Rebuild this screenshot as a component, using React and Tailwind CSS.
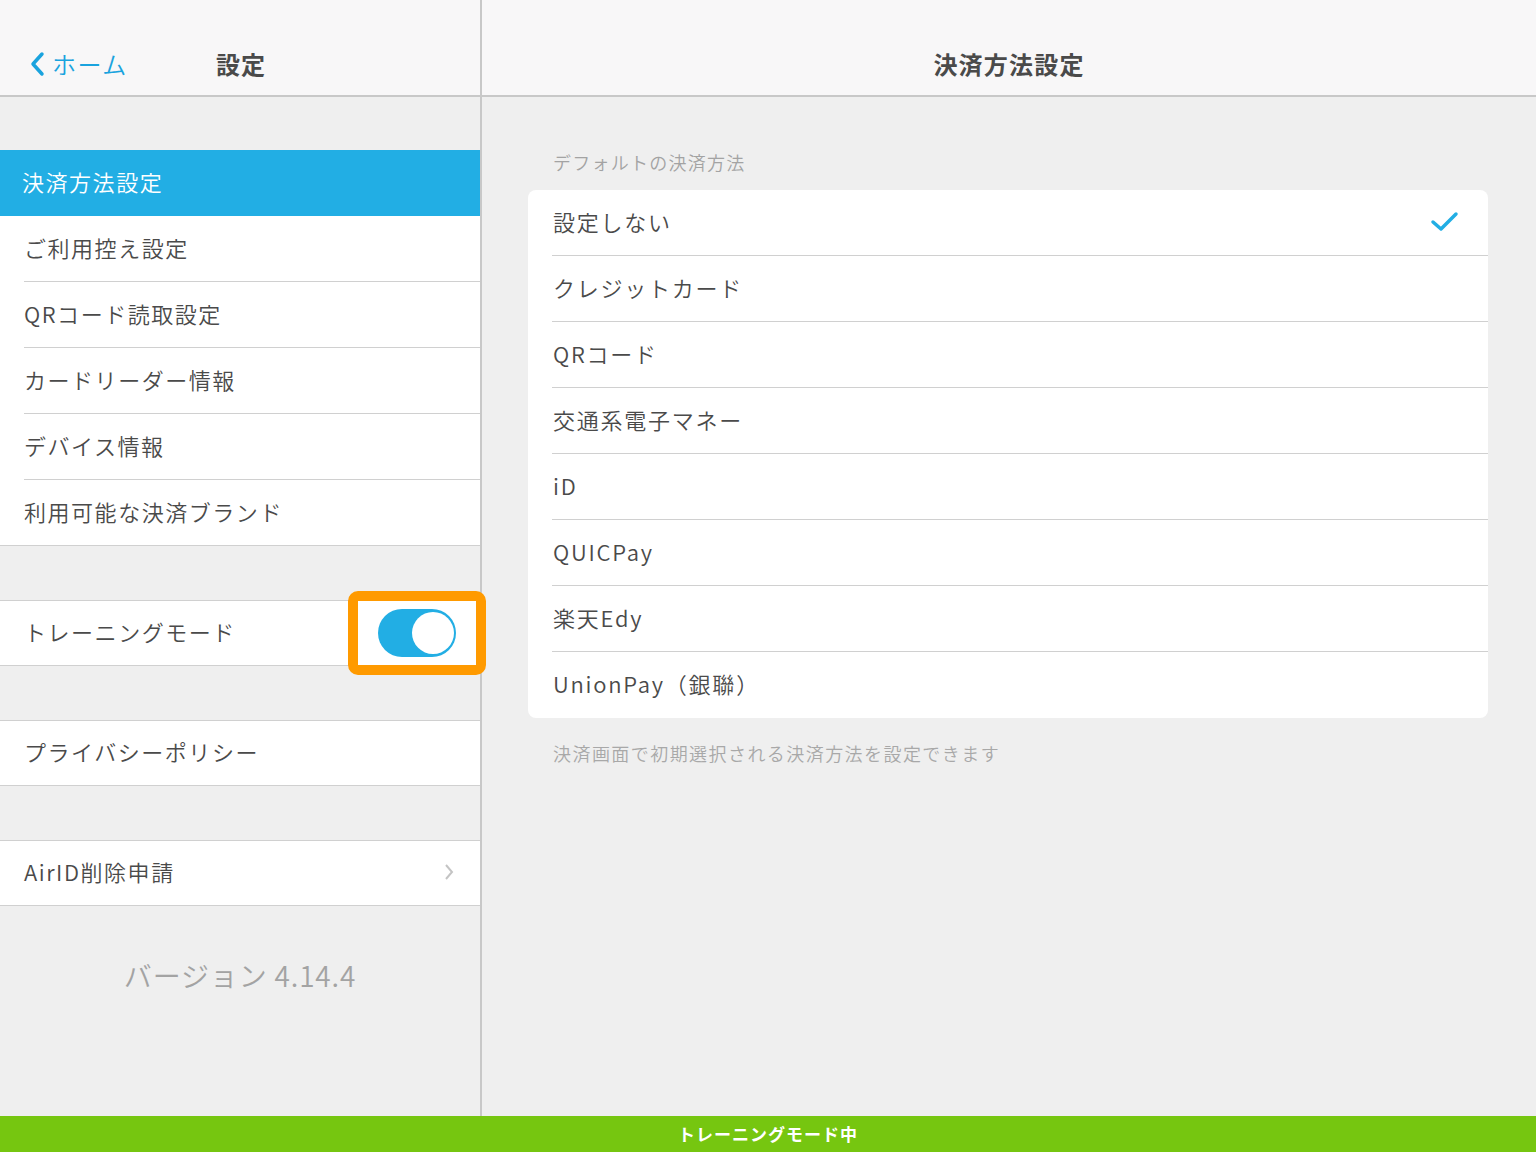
import React from 'react';

const font = { fontFamily: '"Noto Sans CJK JP", "Noto Sans", sans-serif' };

const menuItems = ['決済方法設定', 'ご利用控え設定', 'QRコード読取設定', 'カードリーダー情報', 'デバイス情報', '利用可能な決済ブランド'];
const methods = ['設定しない', 'クレジットカード', 'QRコード', '交通系電子マネー', 'iD', 'QUICPay', '楽天Edy', 'UnionPay（銀聯）'];

const Row = ({ children, divider, className = '' }) => (
  <div className={`relative flex items-center pl-6 pb-[3px] text-[22px] font-[350] tracking-[0.07em] text-[#4a4a4a] ${className}`}>
    {children}
    {divider && <div className="absolute left-6 right-0 bottom-0 h-px bg-[#d0d0d0]" />}
  </div>
);

const App = () => {
  return (
    <div className="w-[1536px] h-[1152px] flex flex-col bg-[#efefef] overflow-hidden" style={font}>
      <div className="flex flex-1 min-h-0">
        {/* Left panel */}
        <div className="w-[482px] flex flex-col border-r-2 border-[#c8c8c8] relative">
          <div className="h-[97px] bg-[#f8f7f8] border-b-2 border-[#c8c8c8] flex items-end pb-[13px] shrink-0">
            <div className="flex items-center text-[#1aa3de] text-[24px] font-[350] tracking-[0.06em] pl-[28px] w-[216px]">
              <svg width="18" height="26" viewBox="0 0 18 26" className="mr-[6px]">
                <path d="M14 3 L5 13 L14 23" fill="none" stroke="#1aa3de" strokeWidth="3.5" strokeLinecap="round" strokeLinejoin="round" />
              </svg>
              <span>ホーム</span>
            </div>
            <div className="text-[24px] font-bold tracking-[0.04em] text-[#4a4a4a]">設定</div>
          </div>

          <div className="h-[53px]" />
          <div className="bg-white border-b border-[#d0d0d0]">
            {menuItems.map((m, i) =>
              i === 0 ? (
                <div key={m} className="h-[66px] flex items-center pl-[22px] pb-[3px] text-[22px] font-[350] tracking-[0.07em] text-white bg-[#22aee4]">
                  {m}
                </div>
              ) : (
                <Row key={m} divider={i < menuItems.length - 1} className={i < menuItems.length - 1 ? 'h-[66px]' : 'h-[65px]'}>{m}</Row>
              )
            )}
          </div>

          <div className="h-[54px]" />
          <div className="bg-white border-y border-[#d0d0d0]">
            <Row className="h-[64px]">トレーニングモード</Row>
          </div>

          <div className="h-[54px]" />
          <div className="bg-white border-y border-[#d0d0d0]">
            <Row className="h-[64px]">プライバシーポリシー</Row>
          </div>

          <div className="h-[54px]" />
          <div className="bg-white border-y border-[#d0d0d0]">
            <Row className="h-[64px] justify-between pr-[26px]">
              <span>AirID削除申請</span>
              <svg width="10" height="18" viewBox="0 0 10 18">
                <path d="M2 2 L8 9 L2 16" fill="none" stroke="#c4c4c4" strokeWidth="2" />
              </svg>
            </Row>
          </div>

          <div className="text-center text-[28px] font-[350] tracking-[0.03em] text-[#a3a3a3] mt-[48px]">バージョン 4.14.4</div>

          {/* highlighted toggle */}
          <div className="absolute left-[348px] top-[591px] w-[138px] h-[84px] rounded-[10px] border-[10px] border-[#ff9a00] bg-white flex items-center justify-center z-10">
            <div className="w-[78px] h-[48px] rounded-full bg-[#22aee4] relative">
              <div className="absolute right-[2px] top-[3px] w-[42px] h-[42px] rounded-full bg-white" />
            </div>
          </div>
        </div>

        {/* Right panel */}
        <div className="flex-1 flex flex-col">
          <div className="h-[97px] bg-[#f8f7f8] border-b-2 border-[#c8c8c8] flex items-end justify-center pb-[13px] shrink-0">
            <div className="text-[24px] font-bold tracking-[0.05em] text-[#4a4a4a]">決済方法設定</div>
          </div>
          <div className="pl-[46px] pr-[48px]">
            <div className="text-[18px] font-[350] tracking-[0.07em] text-[#a3a3a3] pl-[25px] pt-[52px] pb-[14px]">デフォルトの決済方法</div>
            <div className="bg-white rounded-[8px] overflow-hidden">
              {methods.map((m, i) => (
                <div key={m} className="relative h-[66px] flex items-center justify-between pl-[25px] pr-[28px] pb-[3px] text-[22px] font-[350] tracking-[0.08em] text-[#4a4a4a]">
                  <span>{m}</span>
                  {i === 0 && (
                    <svg width="30" height="24" viewBox="0 0 30 24">
                      <path d="M3 12 L11 19 L26 4" fill="none" stroke="#22aee4" strokeWidth="3.5" strokeLinecap="round" strokeLinejoin="round" />
                    </svg>
                  )}
                  {i < methods.length - 1 && <div className="absolute left-6 right-0 bottom-0 h-px bg-[#d0d0d0]" />}
                </div>
              ))}
            </div>
            <div className="text-[18px] font-[350] tracking-[0.08em] text-[#a8a8a8] pl-[25px] pt-[22px]">決済画面で初期選択される決済方法を設定できます</div>
          </div>
        </div>
      </div>

      <div className="h-[36px] bg-[#76c610] flex items-center justify-center text-white text-[17px] font-bold tracking-[0.06em] shrink-0">
        トレーニングモード中
      </div>
    </div>
  );
};

export default App;
